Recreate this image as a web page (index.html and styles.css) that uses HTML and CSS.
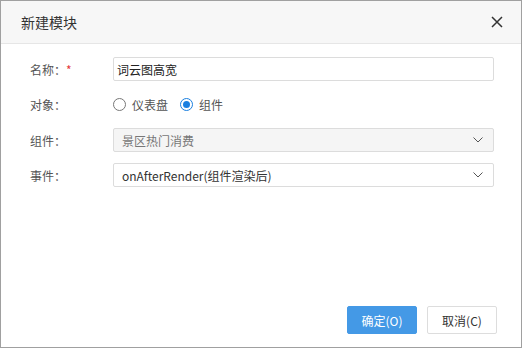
FILE: index.html
```html
<!DOCTYPE html>
<html lang="zh-CN">
<head>
  <meta charset="UTF-8">
  <title>新建模块</title>
  <link rel="stylesheet" href="styles.css">
</head>
<body>
  <div class="dialog">
    <div class="dialog-header">
      <span class="dialog-title">新建模块</span>
      <svg class="dialog-close" width="12" height="12" viewBox="0 0 12 12">
        <path d="M1 1 L11 11 M11 1 L1 11" stroke="#333" stroke-width="1.5" fill="none"/>
      </svg>
    </div>
    <div class="dialog-body">
      <div class="form-row">
        <label class="form-label">名称：<span class="required">*</span></label>
        <div class="form-input">词云图高宽</div>
      </div>
      <div class="form-row">
        <label class="form-label">对象：</label>
        <div class="radio-group">
          <span class="radio"><span class="radio-dot"></span>仪表盘</span>
          <span class="radio checked"><span class="radio-dot"></span>组件</span>
        </div>
      </div>
      <div class="form-row">
        <label class="form-label">组件：</label>
        <div class="form-select disabled">
          <span>景区热门消费</span>
          <svg width="10" height="6" viewBox="0 0 10 6"><path d="M0.5 0.5 L5 5 L9.5 0.5" stroke="#555" stroke-width="1" fill="none"/></svg>
        </div>
      </div>
      <div class="form-row">
        <label class="form-label">事件：</label>
        <div class="form-select">
          <span>onAfterRender(组件渲染后)</span>
          <svg width="10" height="6" viewBox="0 0 10 6"><path d="M0.5 0.5 L5 5 L9.5 0.5" stroke="#555" stroke-width="1" fill="none"/></svg>
        </div>
      </div>
    </div>
    <div class="dialog-footer">
      <button class="btn btn-primary">确定(O)</button>
      <button class="btn">取消(C)</button>
    </div>
  </div>
</body>
</html>
```
FILE: styles.css
```css
body {
  margin: 0;
  font-family: "Noto Sans CJK SC", "Liberation Sans", sans-serif;
  font-size: 12px;
  color: #333;
  background: #fff;
}
.dialog {
  width: 522px;
  height: 348px;
  box-sizing: border-box;
  border: 1px solid #a0a0a0;
  display: flex;
  flex-direction: column;
}
.dialog-header {
  height: 42px;
  background: #f7f7f7;
  border-bottom: 1px solid #e6e6e6;
  padding: 0 18px 0 20px;
  display: flex;
  align-items: center;
  justify-content: space-between;
}
.dialog-title {
  font-size: 14px;
  color: #333;
}
.dialog-body {
  flex: 1;
  padding: 13px 27px 0 29px;
}
.form-row {
  display: flex;
  align-items: center;
  height: 24px;
  margin-bottom: 11px;
}
.form-row:nth-child(2) {
  margin-bottom: 12px;
}
.form-label {
  width: 83px;
  flex: none;
  color: #555;
}
.required {
  color: #e5393b;
}
.form-input,
.form-select {
  flex: 1;
  height: 24px;
  box-sizing: border-box;
  border: 1px solid #dcdcdc;
  border-radius: 2px;
  display: flex;
  align-items: center;
}
.form-input {
  padding: 0 3px;
  color: #222;
}
.form-select {
  padding: 0 10px 0 8px;
  justify-content: space-between;
  color: #333;
}
.form-select.disabled {
  background: #f5f5f5;
  color: #777;
}
.radio-group {
  display: flex;
  gap: 12px;
}
.radio {
  display: flex;
  align-items: center;
  gap: 6px;
  color: #555;
}
.radio-dot {
  width: 13px;
  height: 13px;
  box-sizing: border-box;
  border: 1px solid #777;
  border-radius: 50%;
  position: relative;
}
.radio.checked .radio-dot {
  border-color: #1a7fe0;
}
.radio.checked .radio-dot::after {
  content: "";
  position: absolute;
  top: 2px;
  left: 2px;
  width: 7px;
  height: 7px;
  border-radius: 50%;
  background: #1a7fe0;
}
.dialog-footer {
  display: flex;
  justify-content: flex-end;
  gap: 10px;
  padding: 0 24px 13px 0;
}
.btn {
  width: 70px;
  height: 28px;
  font-family: inherit;
  font-size: 12px;
  border: 1px solid #ddd;
  border-radius: 2px;
  background: #fff;
  color: #333;
}
.btn-primary {
  background: #4499e6;
  border-color: #4499e6;
  color: #fff;
}
```
